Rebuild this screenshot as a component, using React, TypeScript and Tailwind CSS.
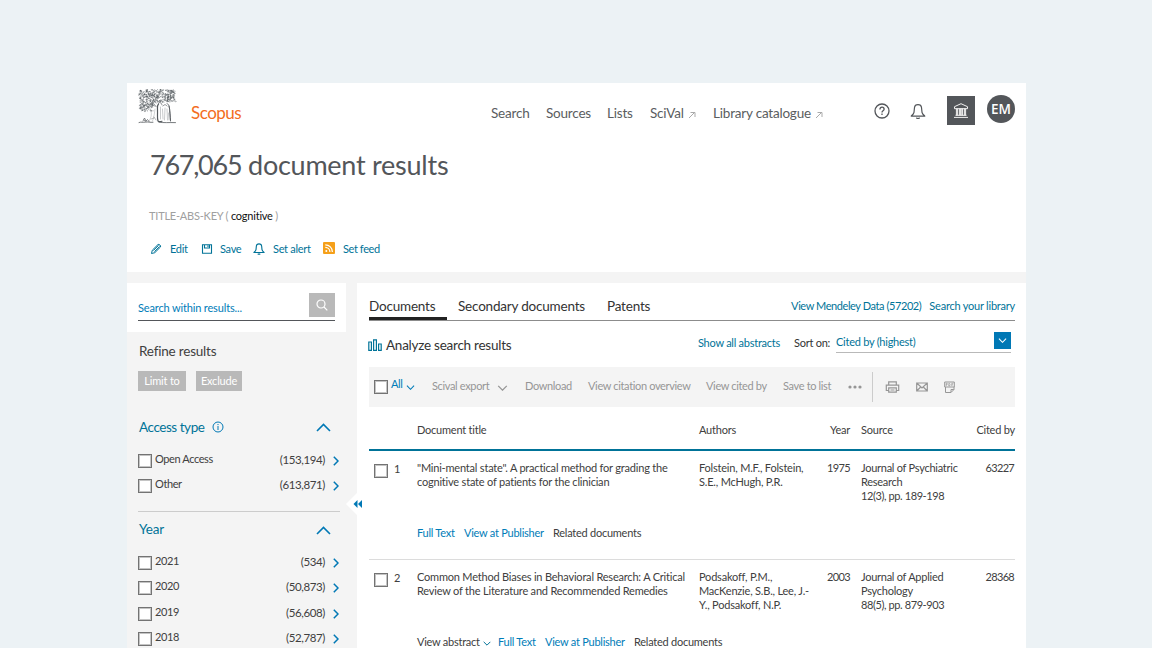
import React from "react";

function Chevron({ className, d = "M1 1l5 5 5-5", box = "0 0 12 7", sw = 1.5 }: { className: string; d?: string; box?: string; sw?: number }) {
  return (
    <svg viewBox={box} className={className} fill="none" stroke="currentColor" strokeWidth={sw}>
      <path d={d} />
    </svg>
  );
}

function leaves() {
  const out: string[] = [];
  let s = 17;
  const rnd = () => {
    s = (s * 16807) % 2147483647;
    return s / 2147483647;
  };
  for (let i = 0; i < 620; i++) {
    const x = 1 + rnd() * 36.5;
    const y = 0.8 + rnd() * 21;
    if (x > 18 && y > 13) continue;
    if (x > 15 && y > 17) continue;
    const a = rnd() * 2 - 1;
    const b = rnd() * 2 - 1;
    out.push(`M${x.toFixed(1)} ${y.toFixed(1)}q${a.toFixed(1)} ${b.toFixed(1)} ${(b * 1.3).toFixed(1)} ${(-a * 1.2).toFixed(1)}`);
  }
  return out.join("");
}
const LEAVES = leaves();

function TreeLogo() {
  return (
    <svg viewBox="0 0 39 35" className="h-[35px] w-[39px]" fill="none" stroke="#53585c" strokeLinecap="round">
      <path d={LEAVES} strokeWidth="0.5" />
      <path d="M17 20c-.6 4-.8 8-2.500 12M13 22c1 4 0 7-2 10" strokeWidth=".5" stroke="#a2a6a9" />
      <path d="M20.500 15c-1.800 2-.8 4-1 7 .2 4-.5 7 .5 10 1 1 2.500 .8 4 .3" strokeWidth="1.200" />
      <path d="M20.500 14c2-1.500 3 .5 3.500 2 M25 17c1.500-2 3-1.500 4 0 M29 14.500c2.500 .5 2.500 4 2.500 7 l1 9.500" strokeWidth=".7" />
      <path d="M22.500 18v12M24.500 20l.5 10M27 19l-.5 12M29 20l.5 11M30.500 24l.5 7" strokeWidth=".5" stroke="#92979b" />
      <path d="M31 17c1.500 5 1 10 1.500 15" strokeWidth=".9" />
      <path d="M1 33.500c2-1 4 .3 6-.4 3-.6 5 .6 8 .2M21 33.200c4 .8 10 .2 16.500 .4" strokeWidth=".8" />
      <path d="M5 32l1.500-3 1.500 3 1.500-1.500 1.500 2M6 31l2 1.500" strokeWidth=".7" />
      <path d="M16 28l2 3M13 30l3-1" strokeWidth=".4" />
    </svg>
  );
}

function ExternalArrow() {
  return (
    <svg viewBox="0 0 8 8" className="ml-[4px] mt-[8px] h-[8px] w-[8px] text-[#aaa]" fill="none" stroke="currentColor" strokeWidth="1">
      <path d="M1 7l5.500-5.500M2.500 1.500h4.500v4.500" />
    </svg>
  );
}

function Bell({ className, sw }: { className: string; sw: number }) {
  return (
    <svg viewBox="0 0 16 16" className={className} fill="none" stroke="currentColor" strokeWidth={sw} strokeLinejoin="round">
      <path d="M4 8.800L4.500 4C4.700 2 6 1.200 8 1.200S11.300 2 11.500 4l.5 4.800c.3 1.700 1.500 2.700 2.800 3.800H1.200c1.300-1.100 2.500-2.100 2.800-3.800zM6.300 14.300c1.100.9 2.300.9 3.400 0" />
    </svg>
  );
}

function Box() {
  return <span className="block h-[14px] w-[14px] shrink-0 border border-[#737373] bg-white shadow-[inset_0_0_0_1px_#c4c4c4]" />;
}

function Header() {
  return (
    <header className="h-[189px] bg-white">
      <div className="flex h-[56px] pl-[11px] pr-[11px]">
        <div className="w-[53px] pt-[6px]"><TreeLogo /></div>
        <div className="w-[299px] pt-[18px] text-[17px] leading-[24px] tracking-[-0.5px] text-[#f36d21]">Scopus</div>
        <nav className="flex flex-1 pl-px pt-[20px] text-[13.5px] leading-[20px] tracking-[-0.2px] text-[#5a5d60]">
          <a className="w-[55px]">Search</a>
          <a className="w-[61px]">Sources</a>
          <a className="w-[43px]">Lists</a>
          <a className="flex w-[63px] items-start">SciVal<ExternalArrow /></a>
          <a className="flex items-start whitespace-nowrap">Library catalogue<ExternalArrow /></a>
        </nav>
        <div className="flex items-start text-[#53565a]">
          <svg viewBox="0 0 16 16" className="mr-[20px] mt-[20px] h-[16px] w-[16px]" fill="none" stroke="currentColor" strokeWidth="1.300">
            <circle cx="8" cy="8" r="7" />
            <path d="M5.900 6.400c0-1.400.9-2.200 2.100-2.200s2.100.8 2.100 2c0 1.500-2.100 1.600-2.100 3.200M8 10.500v1.400" />
          </svg>
          <Bell className="mr-[21px] mt-[20px] h-[17px] w-[16px]" sw={1.2} />
          <div className="mr-[12px] mt-[13px] flex h-[29px] w-[28px] items-center justify-center bg-[#53565a] text-[#f1f1f1]">
            <svg viewBox="0 0 16 16" className="h-[17px] w-[16px]" fill="none" stroke="currentColor">
              <path d="M8 1.200L1.500 4.200v2h13v-2zM3.400 6v7M6.400 6v7M9.600 6v7M12.600 6v7M4.600 6v7M7.600 6v7M8.800 6v7M11.400 6v7M2.500 12.800h11M1 14.900h14" strokeWidth="1" />
            </svg>
          </div>
          <div className="mt-[12px] flex h-[28px] w-[28px] items-center justify-center rounded-full bg-[#53565a] font-['Open_Sans'] text-[13.5px] font-semibold text-white">EM</div>
        </div>
      </div>
      <div className="pl-[22px]">
        <h1 className="mt-[8px] h-[36px] whitespace-nowrap pl-px text-[27px] leading-[36px] tracking-[-0.25px] text-[#53565a]"><span className="tracking-[-1.25px]">767,065</span> document results</h1>
        <div className="mt-[25px] whitespace-nowrap text-[11px] leading-[16px] tracking-[-0.22px] text-[#a0a0a0]">
          TITLE-ABS-KEY ( <span className="text-[#111]">cognitive</span> )
        </div>
        <div className="mt-[16px] flex items-center text-[11px] leading-[16px] tracking-[-0.3px] text-[#007398]">
          <svg viewBox="0 0 12 12" className="ml-px mr-[8px] h-[12px] w-[12px]" fill="none" stroke="currentColor" strokeWidth="1">
            <path d="M1.500 10.500l.8-3.300L8 1.500c1-.8 3.300 1.300 2.500 2.500L4.800 9.700zM3.300 7.600l5.200-5.200M4.400 8.700l5.200-5.200" />
          </svg>
          <span className="w-[31px] pt-px">Edit</span>
          <svg viewBox="0 0 12 12" className="mr-[7px] h-[12px] w-[12px]" fill="none" stroke="currentColor" strokeWidth="1.100">
            <path d="M1.500 1.800h9v8.400h-9zM3.500 2v3h5v-3" /><path d="M7 2.300v1.700" />
          </svg>
          <span className="w-[33px] pt-px">Save</span>
          <Bell className="mr-[8px] h-[12px] w-[12px]" sw={1.5} />
          <span className="w-[50px] pt-px">Set alert</span>
          <svg viewBox="0 0 12 12" className="mr-[8px] -mt-[2px] h-[12px] w-[12px]">
            <rect width="12" height="12" rx="1" fill="#f5a01a" />
            <circle cx="3.300" cy="8.900" r="1" fill="#fff" />
            <path d="M2.300 5.300c2.600 0 4.600 2 4.600 4.600M2.300 2.800c4 0 7.100 3.100 7.100 7.100" fill="none" stroke="#fff" strokeWidth="1.200" />
          </svg>
          <span className="pt-px tracking-[-0.4px]">Set feed</span>
        </div>
      </div>
    </header>
  );
}

const access = [["Open Access", "(153,194)"], ["Other", "(613,871)"]];
const years = [["2021", "(534)"], ["2020", "(50,873)"], ["2019", "(56,608)"], ["2018", "(52,787)"]];

function FilterRow({ label, count }: { label: string; count: string }) {
  return (
    <div className="flex h-[25.300px] items-start text-[11px] leading-[14px] text-[#404040]">
      <div className="mt-px"><Box /></div>
      <span className="-mt-px ml-[3px] flex-1 tracking-[-0.4px]">{label}</span>
      <span className="mr-[8px] text-[11.5px] tracking-[-0.4px]">{count}</span>
      <Chevron className="mr-px mt-[3px] h-[10px] w-[6px] text-[#0078b5]" box="0 0 6 10" d="M.8.8L5 5 .8 9.200" sw={1.5} />
    </div>
  );
}

function Sidebar() {
  return (
    <aside className="w-[230px] shrink-0">
      <div className="h-[49px] w-[219px] bg-white pl-[11px] pt-[10px]">
        <div className="flex h-[28px] w-[197px] justify-between border-b border-[#53565a]">
          <span className="pt-[7px] text-[11px] leading-[16px] tracking-[-0.15px] text-[#007cb8]">Search within results...</span>
          <span className="flex h-[24px] w-[26px] items-center justify-center bg-[#b9b9b9] text-white">
            <svg viewBox="0 0 12 12" className="h-[12px] w-[12px]" fill="none" stroke="currentColor" strokeWidth="1.200">
              <circle cx="5" cy="5" r="4" /><path d="M8 8l3.300 3.300" />
            </svg>
          </span>
        </div>
      </div>
      <div className="pl-[11px]">
        <h2 className="mt-[9px] pl-px text-[13.5px] leading-[20px] tracking-[-0.2px] text-[#404040]">Refine results</h2>
        <div className="mt-[10px] flex gap-[10px] text-[11px] tracking-[-0.2px] text-white">
          <span className="flex h-[20px] w-[48px] items-center justify-center bg-[#b9b9b9]">Limit to</span>
          <span className="flex h-[20px] w-[46px] items-center justify-center bg-[#b9b9b9]">Exclude</span>
        </div>
        <div className="mt-[26px] flex h-[20px] items-center pl-px text-[13.5px] leading-[20px] text-[#007398]">
          <span className="w-[73px] whitespace-nowrap tracking-[-0.45px]">Access type</span>
          <svg viewBox="0 0 12 12" className="h-[12px] w-[12px] text-[#0078b5]" fill="none" stroke="currentColor" strokeWidth="1">
            <circle cx="6" cy="6" r="5" /><path d="M6 5v4M6 3v1.100" />
          </svg>
          <Chevron className="ml-[92px] h-[9px] w-[15px] text-[#0078b5]" box="0 0 15 9" d="M1 8l6.500-6.500L14 8" sw={1.6} />
        </div>
        <div className="mt-[16px] h-[59px] w-[202px] border-b border-[#ccc]">
          {access.map(([a, b]) => <FilterRow key={a} label={a} count={b} />)}
        </div>
        <div className="mt-[8px] flex h-[20px] items-center pl-px text-[13.5px] leading-[20px] tracking-[-0.2px] text-[#007398]">
          <span className="w-[177px] pb-[2px]">Year</span>
          <Chevron className="h-[9px] w-[15px] text-[#0078b5]" box="0 0 15 9" d="M1 8l6.500-6.500L14 8" sw={1.6} />
        </div>
        <div className="mt-[15px] w-[202px]">
          {years.map(([a, b]) => <FilterRow key={a} label={a} count={b} />)}
        </div>
      </div>
    </aside>
  );
}

function Row({ n, title, authors, year, source, volume, cited, abstract }: { n: number; title: string[]; authors: string[]; year: string; source: string[]; volume: string; cited: string; abstract?: boolean }) {
  return (
    <div className="h-[109px] shrink-0 border-b border-[#dcdcdc] pt-[10px] text-[11px] leading-[14px] text-[#404040]">
      <div className="flex h-[65px] items-start whitespace-nowrap tracking-[-0.2px]">
        <div className="flex w-[48px] pl-[5px]"><div className="mt-[3px]"><Box /></div><span className="ml-[6px] mt-px">{n}</span></div>
        <div className="w-[282px]">{title.map((t) => <div key={t}>{t}</div>)}</div>
        <div className="w-[122px]">{authors.map((t) => <div key={t}>{t}</div>)}</div>
        <div className="w-[29px] text-right tracking-[-0.6px]">{year}</div>
        <div className="ml-[11px] w-[114px] tracking-[-0.26px]">
          {source.map((t) => <div key={t}>{t}</div>)}
          <div className="tracking-[-0.4px]">{volume}</div>
        </div>
        <div className="flex-1 pr-px text-right tracking-[-0.7px]">{cited}</div>
      </div>
      <div className="flex pl-[48px] tracking-[-0.25px]">
        {abstract && <span className="flex w-[81px] items-center">View abstract<Chevron className="ml-[3px] mt-[3px] h-[5px] w-[8px] text-[#007398]" /></span>}
        <span className="w-[47px] text-[#007cb8]">Full Text</span>
        <span className="w-[89px] text-[#007cb8]">View at Publisher</span>
        <span>Related documents</span>
      </div>
    </div>
  );
}

function Results() {
  return (
    <main className="relative flex w-[669px] shrink-0 flex-col overflow-visible bg-white pl-[12px] pr-[11px] whitespace-nowrap">
      <div className="flex h-[38px] border-b border-[#8c8c8c] text-[13.5px] leading-[20px] tracking-[-0.2px] text-[#333]">
        <span className="h-[37px] w-[78px] border-b-[3px] border-[#222] pt-[13px]">Documents</span>
        <span className="ml-[11px] w-[149px] pt-[13px]">Secondary documents</span>
        <span className="flex-1 pt-[13px]">Patents</span>
        <span className="mr-[8px] pt-[13px] text-[11px] tracking-[-0.42px] text-[#007398]">View Mendeley Data (57202)</span>
        <span className="pt-[13px] text-[11px] tracking-[-0.22px] text-[#007398]">Search your library</span>
      </div>
      <div className="flex h-[45px] shrink-0 items-start text-[11px] tracking-[-0.25px] text-[#007398]">
        <svg viewBox="0 0 14 12" className="-ml-px mr-px mt-[18px] h-[12px] w-[14px]" fill="none" stroke="currentColor" strokeWidth="1.200">
          <path d="M.8 3h2.600v8.300H.8zM5.600.8h2.800v10.500H5.600zM10.600 5h2.600v6.300h-2.600z" />
        </svg>
        <span className="ml-[3px] mt-[14px] w-[312px] text-[13.5px] leading-[20px] text-[#333]">Analyze search results</span>
        <span className="mt-[14px] w-[96px] leading-[16px]">Show all abstracts</span>
        <span className="mt-[14px] w-[42px] leading-[16px] text-[#333]">Sort on:</span>
        <span className="flex h-[32px] w-[175px] justify-between border-b border-[#b9b9b9] pt-[11px]">
          <span className="mt-[2px] leading-[16px]">Cited by (highest)</span>
          <span className="flex h-[17px] w-[17px] items-center justify-center bg-[#0078b5] text-white"><Chevron className="h-[5px] w-[9px]" /></span>
        </span>
      </div>
      <div className="mt-px flex h-[40px] shrink-0 items-center bg-[#f4f4f4] pl-[5px] text-[11px] tracking-[-0.35px] text-[#969696]">
        <Box />
        <span className="mb-[5px] ml-[3px] w-[15px] text-[#007cb8]">All</span>
        <Chevron className="mr-[17px] h-[5px] w-[9px] text-[#007cb8]" />
        <span className="mb-[2px] w-[65px]">Scival export</span>
        <Chevron className="mr-[17px] mt-[2px] h-[6px] w-[11px]" />
        <span className="mb-[2px] w-[63px]">Download</span>
        <span className="mb-[2px] w-[118px]">View citation overview</span>
        <span className="mb-[2px] w-[77px]">View cited by</span>
        <span className="mb-[2px] w-[65px]">Save to list</span>
        <svg viewBox="0 0 14 4" className="h-[4px] w-[14px]" fill="currentColor"><circle cx="2" cy="2" r="1.600" /><circle cx="7" cy="2" r="1.600" /><circle cx="12" cy="2" r="1.600" /></svg>
        <span className="ml-[10px] h-[30px] w-px bg-[#ccc]" />
        <svg viewBox="0 0 14 12" className="ml-[12px] h-[12px] w-[15px]" fill="none" stroke="currentColor" strokeWidth="1.200">
          <path d="M3.200 4V.8h7.600V4M3 9.500H.8V4.200h12.400v5.300H11M3.200 6.800h7.600v4.400H3.200zM5 9h4" />
        </svg>
        <svg viewBox="0 0 12 10" className="ml-[16px] h-[10px] w-[12px]" fill="none" stroke="currentColor" strokeWidth="1.200">
          <path d="M.7 1h10.600v8H.7zM.7 1L6 6l5.300-5M.7 9l4-4M11.300 9l-4-4" />
        </svg>
        <svg viewBox="0 0 11 12" className="ml-[16px] h-[12px] w-[11px]" fill="none" stroke="currentColor" strokeWidth="1">
          <path d="M1.500 6V11.500h5.500l3-3V6M7 11.300V8.500h2.800M.7 1h9.600v5H.7z" />
          <path d="M2.200 5V2.300h1v1.300h-1M4.800 2.300V5h.8l.5-1.300-.5-1.300zM7.800 5V2.300h1.500M7.800 3.700h1" strokeWidth=".7" />
        </svg>
      </div>
      <div className="flex h-[44px] shrink-0 items-center border-b-2 border-[#007398] pt-[4px] text-[11px] tracking-[-0.22px] text-[#404040]">
        <span className="ml-[48px] w-[282px]">Document title</span>
        <span className="w-[122px]">Authors</span>
        <span className="w-[29px] text-right">Year</span>
        <span className="ml-[11px] w-[114px]">Source</span>
        <span className="flex-1 text-right">Cited by</span>
      </div>
      <Row n={1} title={['"Mini-mental state". A practical method for grading the', "cognitive state of patients for the clinician"]} authors={["Folstein, M.F., Folstein,", "S.E., McHugh, P.R."]} year="1975" source={["Journal of Psychiatric", "Research"]} volume="12(3), pp. 189-198" cited="63227" />
      <Row n={2} title={["Common Method Biases in Behavioral Research: A Critical", "Review of the Literature and Recommended Remedies"]} authors={["Podsakoff, P.M.,", "MacKenzie, S.B., Lee, J.-", "Y., Podsakoff, N.P."]} year="2003" source={["Journal of Applied", "Psychology"]} volume="88(5), pp. 879-903" cited="28368" abstract />
      <svg viewBox="0 0 20 22" className="absolute left-[-11px] top-[210px] h-[22px] w-[20px]">
        <path d="M0 11L11 0v22z" fill="#fff" />
        <path d="M11.500 7L7.500 11l4 4zM16 7l-4 4 4 4z" fill="#0078b5" />
      </svg>
    </main>
  );
}

export default function App() {
  return (
    <div className="h-[648px] w-[1152px] overflow-hidden bg-[#ecf2f5] pl-[127px] pt-[83px] font-['Lato','Noto_Sans',sans-serif]">
      <div className="h-[565px] w-[899px] overflow-hidden bg-[#f4f4f4]">
        <Header />
        <div className="mt-[11px] flex h-[365px]">
          <Sidebar />
          <Results />
        </div>
      </div>
    </div>
  );
}
